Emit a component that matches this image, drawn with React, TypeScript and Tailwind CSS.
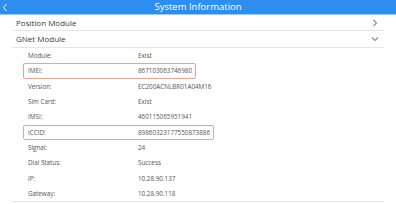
const details: { label: string; value: string; boxed?: boolean }[] = [
  { label: 'Module:', value: 'Exist' },
  { label: 'IMEI:', value: '867103063746980', boxed: true },
  { label: 'Version:', value: 'EC200ACNLBR01A04M16' },
  { label: 'Sim Card:', value: 'Exist' },
  { label: 'IMSI:', value: '460115065951941' },
  { label: 'ICCID:', value: '89860323177550873886', boxed: true },
  { label: 'Signal:', value: '24' },
  { label: 'Dial Status:', value: 'Success' },
  { label: 'IP:', value: '10.28.90.137' },
  { label: 'Gateway:', value: '10.28.90.118' },
];

function ChevronRight() {
  return (
    <svg width="6" height="8" viewBox="0 0 6 8" fill="none" stroke="#8a8a8a" strokeWidth="1.1">
      <path d="M1.5 1 L4.5 4 L1.5 7" />
    </svg>
  );
}

function ChevronDown() {
  return (
    <svg width="8" height="6" viewBox="0 0 8 6" fill="none" stroke="#8a8a8a" strokeWidth="1.1">
      <path d="M1 1.5 L4 4.5 L7 1.5" />
    </svg>
  );
}

export default function App() {
  return (
    <div className="w-[396px] h-[204px] bg-white overflow-hidden font-['Open_Sans',sans-serif]">
      <div className="relative h-[15px] bg-[#2e8ef0] flex items-center justify-center border-b border-[#9cc8f5]">
        <svg className="absolute left-[2px] top-[3px]" width="6" height="9" viewBox="0 0 6 9" fill="none" stroke="#ffffff" strokeWidth="1">
          <path d="M4.5 1 L1.5 4.5 L4.5 8" />
        </svg>
        <span className="text-white text-[9.5px] leading-none">System Information</span>
      </div>
      <div className="mx-[12px]">
        <div className="h-[16px] flex items-center justify-between pl-[4px] pr-[6px] border-b border-[#e6e6e6]">
          <span className="text-[8px] text-[#3a3a3a]">Position Module</span>
          <ChevronRight />
        </div>
        <div className="h-[17px] flex items-center justify-between pl-[4px] pr-[5px] border-b border-[#e6e6e6]">
          <span className="text-[8px] text-[#3a3a3a]">GNet Module</span>
          <ChevronDown />
        </div>
        <div className="border-b border-[#e6e6e6]">
          {details.map((d) => (
            <div key={d.label} className="h-[15.33px] flex items-center">
              <div
                className={
                  d.boxed
                    ? 'ml-[11px] h-[15.33px] inline-flex items-center pl-[4px] pr-[3px] border border-[#eaa398] rounded-[2px]'
                    : 'ml-[11px] h-[15.33px] inline-flex items-center pl-[4px] pr-[3px] border border-transparent'
                }
              >
                <span className="w-[110px] text-[6.3px] text-[#555555]">{d.label}</span>
                <span className="text-[6.3px] text-[#555555]">{d.value}</span>
              </div>
            </div>
          ))}
        </div>
      </div>
    </div>
  );
}
